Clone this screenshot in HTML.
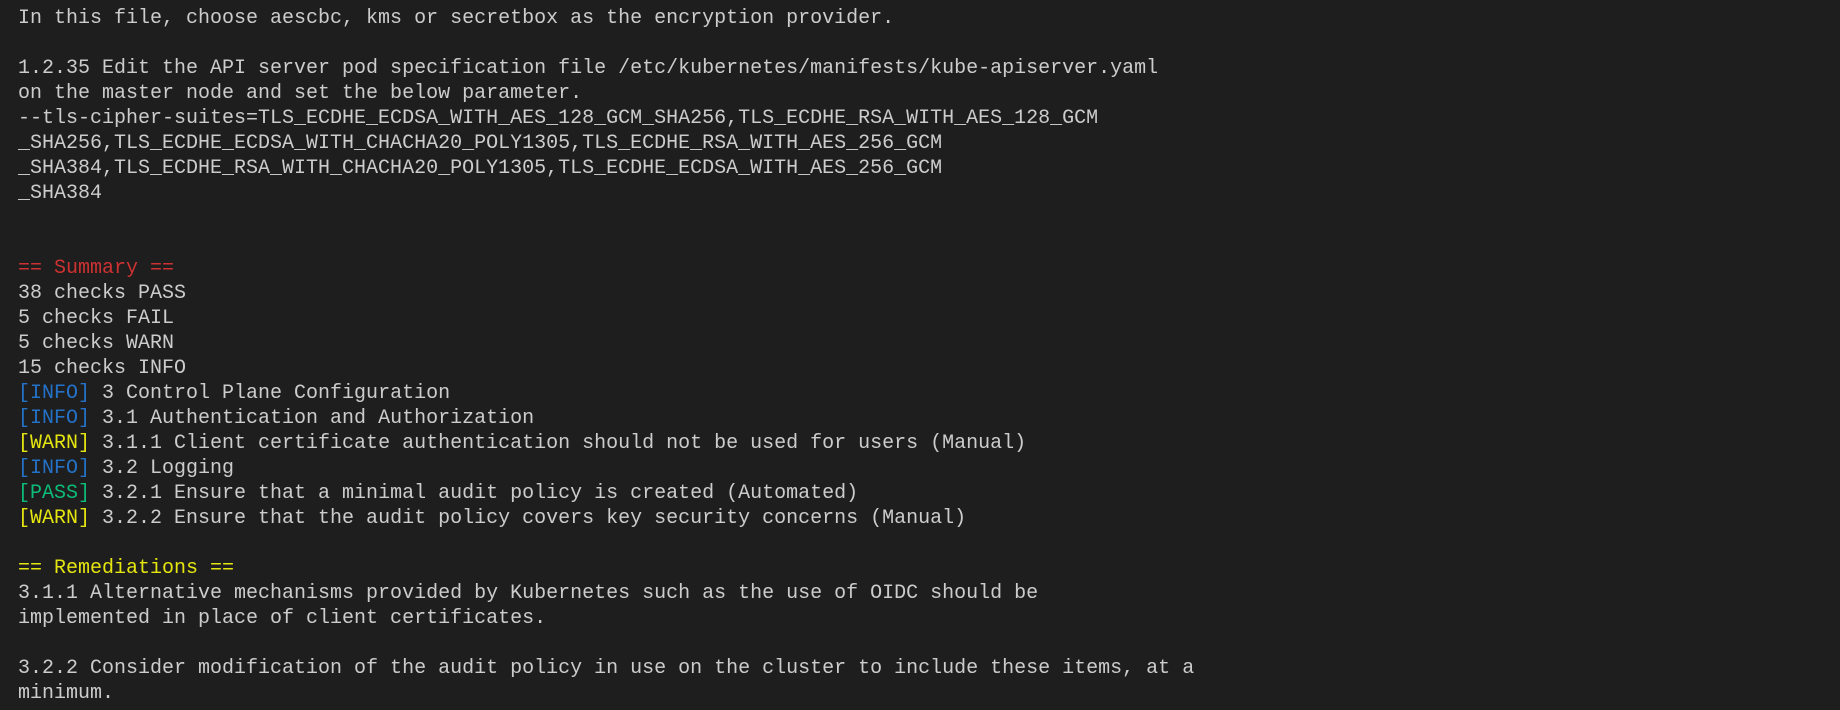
<!DOCTYPE html>
<html><head><meta charset="utf-8"><style>
html,body{margin:0;padding:0;background:#1e1e1e;width:1840px;height:710px;overflow:hidden}
pre{margin:0;position:absolute;left:18px;top:6px;font-family:"Liberation Mono",monospace;font-size:20px;line-height:25px;color:#cccccc;white-space:pre}
.r{color:#cd3131}.b{color:#2472c8}.y{color:#e5e510}.g{color:#0dbc79}
</style></head><body><pre>In this file, choose aescbc, kms or secretbox as the encryption provider.

1.2.35 Edit the API server pod specification file /etc/kubernetes/manifests/kube-apiserver.yaml
on the master node and set the below parameter.
--tls-cipher-suites=TLS_ECDHE_ECDSA_WITH_AES_128_GCM_SHA256,TLS_ECDHE_RSA_WITH_AES_128_GCM
_SHA256,TLS_ECDHE_ECDSA_WITH_CHACHA20_POLY1305,TLS_ECDHE_RSA_WITH_AES_256_GCM
_SHA384,TLS_ECDHE_RSA_WITH_CHACHA20_POLY1305,TLS_ECDHE_ECDSA_WITH_AES_256_GCM
_SHA384


<span class="r">== Summary ==</span>
38 checks PASS
5 checks FAIL
5 checks WARN
15 checks INFO
<span class="b">[INFO]</span> 3 Control Plane Configuration
<span class="b">[INFO]</span> 3.1 Authentication and Authorization
<span class="y">[WARN]</span> 3.1.1 Client certificate authentication should not be used for users (Manual)
<span class="b">[INFO]</span> 3.2 Logging
<span class="g">[PASS]</span> 3.2.1 Ensure that a minimal audit policy is created (Automated)
<span class="y">[WARN]</span> 3.2.2 Ensure that the audit policy covers key security concerns (Manual)

<span class="y">== Remediations ==</span>
3.1.1 Alternative mechanisms provided by Kubernetes such as the use of OIDC should be
implemented in place of client certificates.

3.2.2 Consider modification of the audit policy in use on the cluster to include these items, at a
minimum.
</pre></body></html>
